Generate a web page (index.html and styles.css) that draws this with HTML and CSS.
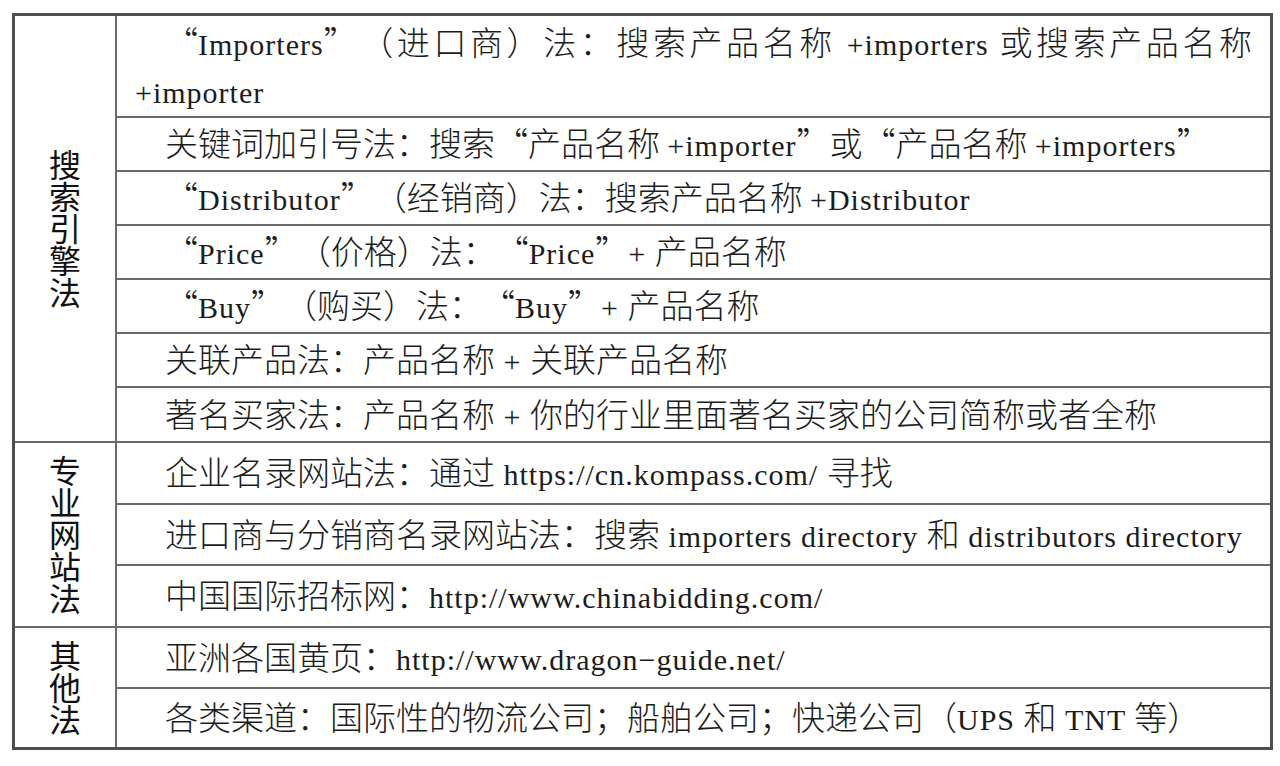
FILE: index.html
```html
<!DOCTYPE html>
<html lang="zh-CN">
<head>
<meta charset="utf-8">
<title>寻找进口商的方法</title>
<link rel="stylesheet" href="styles.css">
</head>
<body>
<div class="sheet">
  <div class="group g1">
    <div class="label"><span class="vert">搜索引擎法</span></div>
    <div class="rows">
      <div class="row tall"><p>“<span class="en">Importers</span>”（进口商）法：搜索产品名称 <span class="en">+importers</span> 或搜索产品名称 <span class="en">+importer</span></p></div>
      <div class="row"><p>关键词加引号法：搜索“产品名称 <span class="en">+importer</span>”或“产品名称 <span class="en">+importers</span>”</p></div>
      <div class="row"><p>“<span class="en">Distributor</span>”（经销商）法：搜索产品名称 <span class="en">+Distributor</span></p></div>
      <div class="row"><p>“<span class="en">Price</span>”（价格）法：“<span class="en">Price</span>”<span class="en">+ </span>产品名称</p></div>
      <div class="row"><p>“<span class="en">Buy</span>”（购买）法：“<span class="en">Buy</span>”<span class="en">+ </span>产品名称</p></div>
      <div class="row"><p>关联产品法：产品名称<span class="en"> + </span>关联产品名称</p></div>
      <div class="row"><p>著名买家法：产品名称<span class="en"> + </span>你的行业里面著名买家的公司简称或者全称</p></div>
    </div>
  </div>
  <div class="group g2">
    <div class="label"><span class="vert">专业网站法</span></div>
    <div class="rows">
      <div class="row"><p>企业名录网站法：通过<span class="en"> https://cn.kompass.com/ </span>寻找</p></div>
      <div class="row"><p>进口商与分销商名录网站法：搜索<span class="en"> importers directory </span>和<span class="en"> distributors directory</span></p></div>
      <div class="row"><p>中国国际招标网：<span class="en">http://www.chinabidding.com/</span></p></div>
    </div>
  </div>
  <div class="group g3">
    <div class="label"><span class="vert">其他法</span></div>
    <div class="rows">
      <div class="row"><p>亚洲各国黄页：<span class="en">http://www.dragon−guide.net/</span></p></div>
      <div class="row"><p>各类渠道：国际性的物流公司；船舶公司；快递公司（<span class="en">UPS </span>和<span class="en"> TNT </span>等）</p></div>
    </div>
  </div>
</div>
</body>
</html>
```

FILE: styles.css
```css
html, body {
  margin: 0;
  padding: 0;
  background: #ffffff;
}

.sheet {
  box-sizing: border-box;
  width: 1261px;
  margin: 13px 0 0 12px;
  border: 3px solid #4e4e4e;
  font-family: "Noto Sans CJK SC", sans-serif;
  color: #1c1c1c;
}

.group {
  display: flex;
  border-bottom: 2px solid #6a6a6a;
}

.group:last-child {
  border-bottom: 0;
}

.label {
  box-sizing: border-box;
  width: 102px;
  flex: 0 0 102px;
  border-right: 2px solid #6a6a6a;
  display: flex;
  align-items: center;
  justify-content: center;
}

.vert {
  writing-mode: vertical-rl;
  font-size: 32px;
  line-height: 1;
  font-weight: 400;
  color: #111111;
}

.rows {
  flex: 1;
  display: flex;
  flex-direction: column;
}

.row {
  box-sizing: border-box;
  height: 54px;
  padding: 0 18px 4px;
  border-bottom: 2px solid #6a6a6a;
  display: flex;
  align-items: center;
}

.row:last-child {
  border-bottom: 0;
  height: 53px;
}

.g1 .tall {
  height: 102px;
  padding-bottom: 2px;
}

.g2 .row {
  height: 62px;
}

.g2 .row:nth-child(2) {
  height: 61px;
}

.g2 .row:last-child {
  height: 60px;
}

.g3 .row {
  height: 61px;
}

.g3 .row:last-child {
  height: 58px;
}

.row p {
  margin: 0;
  width: 100%;
  font-size: 33px;
  line-height: 48px;
  font-weight: 300;
  text-indent: 30px;
  text-align: justify;
  text-spacing-trim: space-all;
}

.en {
  font-family: "Liberation Serif", serif;
  font-size: 30px;
  line-height: 1;
  font-weight: 400;
  letter-spacing: 1px;
}
```
